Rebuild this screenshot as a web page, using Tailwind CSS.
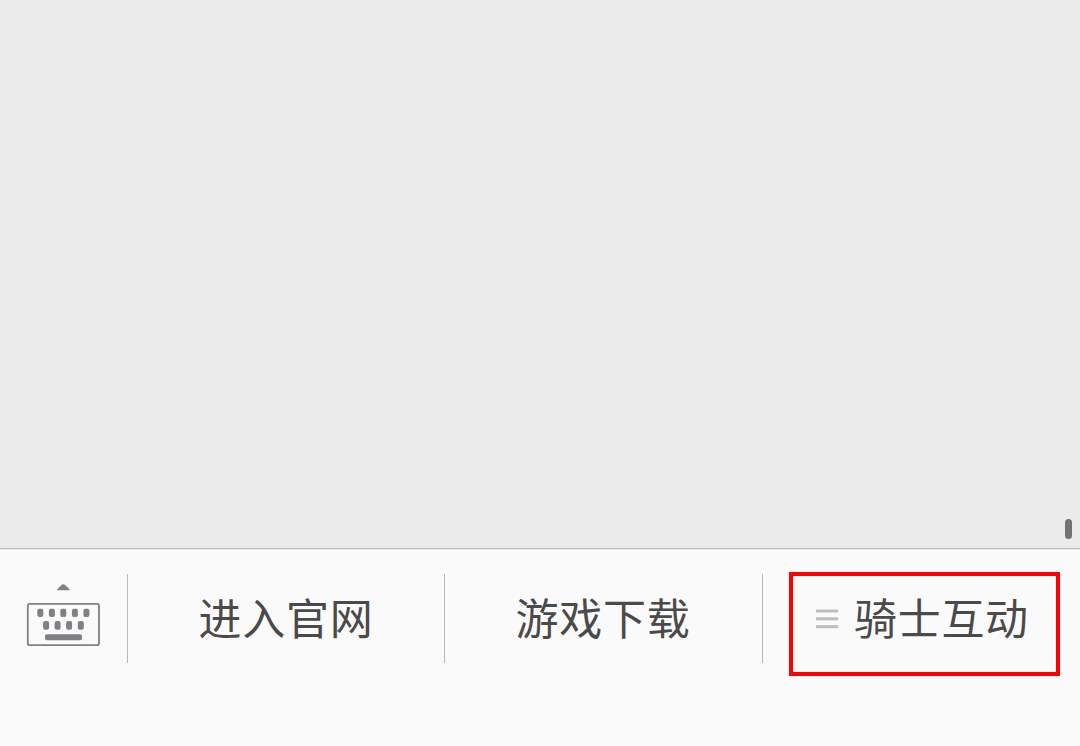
<!DOCTYPE html>
<html lang="zh-CN">
<head>
    <meta charset="UTF-8">
    <meta name="viewport" content="width=device-width, initial-scale=1.0">
    <title>骑士互动</title>
    <script src="https://cdn.jsdelivr.net/npm/@tailwindcss/browser@4"></script>
</head>
<body class="bg-[#ebebeb] font-['Noto_Sans_CJK_SC',sans-serif]">
    <div class="flex h-[746px] w-[1080px] flex-col overflow-hidden">
        <!-- Message area -->
        <main class="flex flex-1 items-end justify-end pr-[8.5px] pb-[9px]">
            <div class="h-5 w-[6.5px] rounded-full bg-[#737373]"></div>
        </main>

        <!-- Menu bar -->
        <footer class="h-[198px] border-t border-[#c0c0c0] bg-[#fafafa]">
            <div class="h-px bg-[#e6e6e6]"></div>
            <nav class="mt-6 flex h-[89px] text-[43px] leading-none tracking-[0.7px] text-[#4a4a4a]">
                <button class="w-[127px] shrink-0" aria-label="键盘">
                    <svg class="block h-[89px] w-[127px]" viewBox="0 0 127 89" fill="#808184">
                        <path d="M56.8 16.2Q57.3 14.8 61 11.4Q63.3 9 65.6 11.4Q69.5 14.8 70 16.2Z" />
                        <rect x="27.8" y="29.8" width="71.2" height="41.4" rx="2" fill="none" stroke="#808184" stroke-width="1.8" />
                        <rect x="37.3" y="34.7" width="6" height="8.4" rx="2" />
                        <rect x="48.9" y="34.7" width="6" height="8.4" rx="2" />
                        <rect x="60.3" y="34.7" width="6" height="8.4" rx="2" />
                        <rect x="71.9" y="34.7" width="6" height="8.4" rx="2" />
                        <rect x="83.4" y="34.7" width="6" height="8.4" rx="2" />
                        <rect x="43.1" y="47.1" width="6" height="8.6" rx="2" />
                        <rect x="54.6" y="47.1" width="6" height="8.6" rx="2" />
                        <rect x="66.1" y="47.1" width="6" height="8.6" rx="2" />
                        <rect x="77.8" y="47.1" width="6" height="8.6" rx="2" />
                        <rect x="45" y="60.2" width="37" height="6" rx="2" />
                    </svg>
                </button>
                <button class="w-[317px] shrink-0 border-l border-[#b8b8b8] pb-1">进入官网</button>
                <button class="w-[318px] shrink-0 border-l border-[#b8b8b8] pr-px pb-1">游戏下载</button>
                <div class="flex flex-1 border-l border-[#b8b8b8]">
                    <button class="-mt-0.5 ml-[26px] flex h-[104px] w-[271px] shrink-0 items-center border-4 border-[#ff0000] pb-[11px] pl-[23px]">
                        <svg class="mr-4 h-5 w-[22px]" viewBox="0 0 22 20" fill="#bdbdbd">
                            <rect y="0.5" width="22" height="3" />
                            <rect y="8.3" width="22" height="3" />
                            <rect y="16.2" width="22" height="3" />
                        </svg>
                        <span class="pb-[5px]">骑士互动</span>
                    </button>
                </div>
            </nav>
        </footer>
    </div>
</body>
</html>
